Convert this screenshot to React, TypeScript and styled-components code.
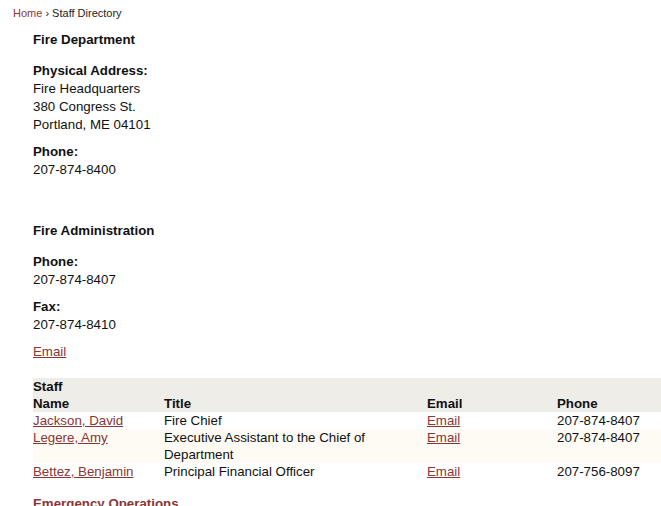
import React from "react";
import styled, { createGlobalStyle } from "styled-components";

const GlobalStyle = createGlobalStyle`
  html, body {
    margin: 0;
    padding: 0;
    background: #fff;
  }
  body {
    font-family: "Liberation Sans", Arial, Helvetica, sans-serif;
    color: #111;
    font-size: 13.3px;
    line-height: 18px;
  }
`;

const LINK = "#8b3535";

const Page = styled.div`
  width: 661px;
  overflow: hidden;
`;

const Crumbs = styled.nav`
  padding: 6px 0 0 13px;
  font-size: 11px;
  line-height: 14px;
  color: #222;
  a {
    color: ${LINK};
    text-decoration: none;
  }
`;

const Content = styled.div`
  padding-left: 33px;
`;

const SectionTitle = styled.h2<{ $top: number }>`
  margin: ${(p) => p.$top}px 0 0;
  font-size: 13.3px;
  line-height: 18px;
  font-weight: bold;
  color: ${(p) => (p.color ? p.color : "#111")};
`;

const Block = styled.div<{ $top?: number }>`
  margin-top: ${(p) => (p.$top !== undefined ? p.$top : 9)}px;
`;

const Label = styled.div`
  font-weight: bold;
`;

const Link = styled.a`
  color: ${LINK};
  text-decoration: underline;
`;

const Table = styled.table`
  margin-top: 17px;
  width: 628px;
  border-collapse: collapse;
  table-layout: fixed;
  line-height: 17px;
  th {
    text-align: left;
    font-weight: bold;
    padding: 0;
  }
  td {
    padding: 0;
    vertical-align: top;
  }
  thead tr {
    background: #eeede7;
  }
`;

const Row = styled.tr<{ $shade?: boolean }>`
  background: ${(p) => (p.$shade ? "#fdfbf3" : "#fff")};
`;

type Staff = { name: string; title: string; phone: string };

const staff: Staff[] = [
  { name: "Jackson, David", title: "Fire Chief", phone: "207-874-8407" },
  {
    name: "Legere, Amy",
    title: "Executive Assistant to the Chief of Department",
    phone: "207-874-8407",
  },
  {
    name: "Bettez, Benjamin",
    title: "Principal Financial Officer",
    phone: "207-756-8097",
  },
];

export default function App() {
  return (
    <Page>
      <GlobalStyle />
      <Crumbs>
        <a href="#">Home</a> › Staff Directory
      </Crumbs>
      <Content>
        <SectionTitle $top={11}>Fire Department</SectionTitle>
        <Block $top={13}>
          <Label>Physical Address:</Label>
          <div>Fire Headquarters</div>
          <div>380 Congress St.</div>
          <div>Portland, ME 04101</div>
        </Block>
        <Block>
          <Label>Phone:</Label>
          <div>207-874-8400</div>
        </Block>

        <SectionTitle $top={43}>Fire Administration</SectionTitle>
        <Block $top={13}>
          <Label>Phone:</Label>
          <div>207-874-8407</div>
        </Block>
        <Block>
          <Label>Fax:</Label>
          <div>207-874-8410</div>
        </Block>
        <Block>
          <Link href="#">Email</Link>
        </Block>

        <Table>
          <colgroup>
            <col style={{ width: 131 }} />
            <col style={{ width: 263 }} />
            <col style={{ width: 130 }} />
            <col />
          </colgroup>
          <thead>
            <tr>
              <th colSpan={4}>Staff</th>
            </tr>
            <tr>
              <th>Name</th>
              <th>Title</th>
              <th>Email</th>
              <th>Phone</th>
            </tr>
          </thead>
          <tbody>
            {staff.map((s, i) => (
              <Row key={s.name} $shade={i % 2 === 1}>
                <td>
                  <Link href="#">{s.name}</Link>
                </td>
                <td>{s.title}</td>
                <td>
                  <Link href="#">Email</Link>
                </td>
                <td>{s.phone}</td>
              </Row>
            ))}
          </tbody>
        </Table>

        <SectionTitle $top={15} color={LINK}>
          Emergency Operations
        </SectionTitle>
      </Content>
    </Page>
  );
}
